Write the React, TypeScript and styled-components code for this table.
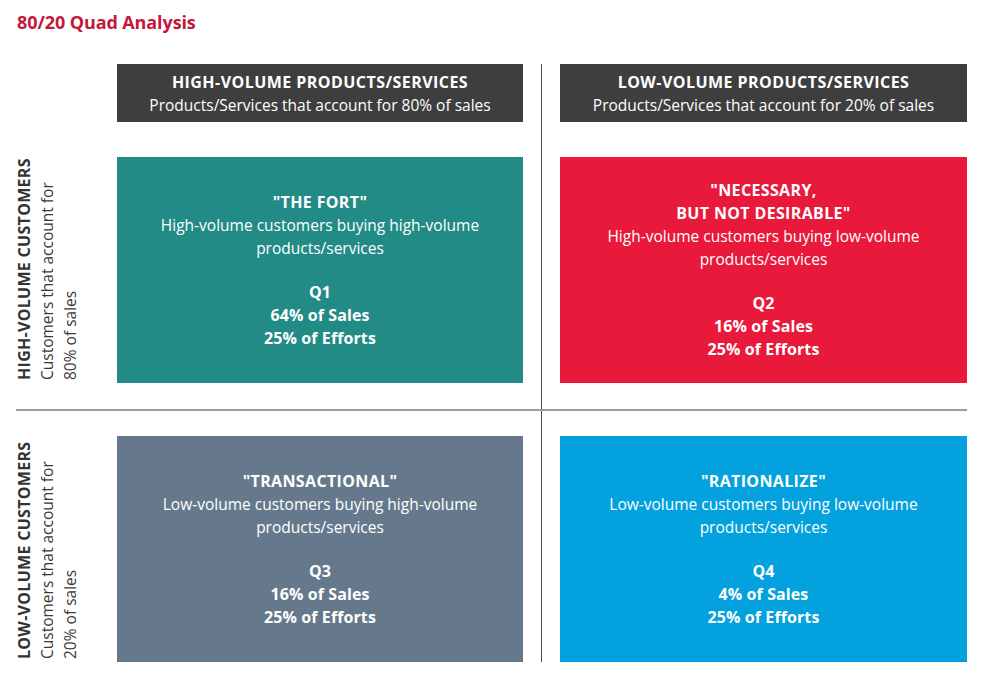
import React from "react";
import styled, { createGlobalStyle } from "styled-components";

const Global = createGlobalStyle`
  html, body { margin: 0; padding: 0; background: #ffffff; }
  body { font-family: "Open Sans", "Noto Sans", Arial, sans-serif; }
`;

const Page = styled.div`
  width: 984px;
  height: 678px;
  box-sizing: border-box;
  padding: 10px 0 0 13px;
  background: #ffffff;
`;

const Title = styled.h1`
  margin: 0;
  font-size: 18px;
  line-height: 24px;
  font-weight: 700;
  color: #c3183c;
  padding-left: 4px;
  letter-spacing: -0.1px;
`;

const Grid = styled.div`
  margin-top: 30px;
  display: grid;
  grid-template-columns: 104px 406px 37px 407px;
  grid-template-rows: 58px 35px 226px 26px 2px 25px 226px;
`;

const ColHeader = styled.div<{ $col: number }>`
  grid-column: ${(p) => p.$col};
  grid-row: 1;
  background: #3e3e3e;
  color: #ffffff;
  display: flex;
  flex-direction: column;
  align-items: center;
  justify-content: center;
  padding-top: 2px;
  font-size: 15.5px;
  line-height: 23px;
`;

const HeadTitle = styled.div`
  font-weight: 700;
  font-size: 16px;
  letter-spacing: 0.45px;
`;

const HeadSub = styled.div`
  font-weight: 400;
`;

const VLine = styled.div`
  grid-column: 3;
  grid-row: 1 / -1;
  justify-self: center;
  width: 1px;
  background: #4a4a4a;
`;

const HLine = styled.div`
  grid-column: 1 / -1;
  grid-row: 5;
  margin-left: 3px;
  background: #9c9c9c;
`;

const RowLabel = styled.div<{ $row: number }>`
  grid-column: 1;
  grid-row: ${(p) => p.$row};
  writing-mode: vertical-rl;
  transform: rotate(180deg);
  justify-self: start;
  font-size: 15.5px;
  line-height: 23px;
  color: #3a3a3a;
  text-align: left;
  padding-top: 3px;
`;

const LabelTitle = styled.div`
  font-weight: 700;
  font-size: 16px;
  letter-spacing: 0.3px;
  color: #333333;
`;

const LabelSub = styled.div`
  font-weight: 400;
`;

const Quad = styled.div<{ $col: number; $row: number; $bg: string }>`
  grid-column: ${(p) => p.$col};
  grid-row: ${(p) => p.$row};
  background: ${(p) => p.$bg};
  color: #ffffff;
  display: flex;
  flex-direction: column;
  align-items: center;
  justify-content: center;
  text-align: center;
  font-size: 15.5px;
  line-height: 23px;
  padding: 0 30px;
`;

const QuadName = styled.div`
  font-weight: 700;
  font-size: 16px;
  letter-spacing: 0.35px;
`;

const QuadDesc = styled.div`
  font-weight: 400;
  max-width: 340px;
  margin-bottom: 21px;
`;

const QuadStat = styled.div`
  font-weight: 700;
  font-size: 16px;
  letter-spacing: 0.1px;
`;

type QuadData = {
  col: number;
  row: number;
  bg: string;
  name: string[];
  desc: string;
  q: string;
  sales: string;
};

const quads: QuadData[] = [
  {
    col: 2,
    row: 3,
    bg: "#228b86",
    name: ['"THE FORT"'],
    desc: "High-volume customers buying high-volume products/services",
    q: "Q1",
    sales: "64% of Sales",
  },
  {
    col: 4,
    row: 3,
    bg: "#e8193b",
    name: ['"NECESSARY,', 'BUT NOT DESIRABLE"'],
    desc: "High-volume customers buying low-volume products/services",
    q: "Q2",
    sales: "16% of Sales",
  },
  {
    col: 2,
    row: 7,
    bg: "#66798c",
    name: ['"TRANSACTIONAL"'],
    desc: "Low-volume customers buying high-volume products/services",
    q: "Q3",
    sales: "16% of Sales",
  },
  {
    col: 4,
    row: 7,
    bg: "#03a1dd",
    name: ['"RATIONALIZE"'],
    desc: "Low-volume customers buying low-volume products/services",
    q: "Q4",
    sales: "4% of Sales",
  },
];

export default function App() {
  return (
    <Page>
      <Global />
      <Title>80/20 Quad Analysis</Title>
      <Grid>
        <ColHeader $col={2}>
          <HeadTitle>HIGH-VOLUME PRODUCTS/SERVICES</HeadTitle>
          <HeadSub>Products/Services that account for 80% of sales</HeadSub>
        </ColHeader>
        <ColHeader $col={4}>
          <HeadTitle>LOW-VOLUME PRODUCTS/SERVICES</HeadTitle>
          <HeadSub>Products/Services that account for 20% of sales</HeadSub>
        </ColHeader>
        <VLine />
        <HLine />
        <RowLabel $row={3}>
          <LabelTitle>HIGH-VOLUME CUSTOMERS</LabelTitle>
          <LabelSub>Customers that account for</LabelSub>
          <LabelSub>80% of sales</LabelSub>
        </RowLabel>
        <RowLabel $row={7}>
          <LabelTitle>LOW-VOLUME CUSTOMERS</LabelTitle>
          <LabelSub>Customers that account for</LabelSub>
          <LabelSub>20% of sales</LabelSub>
        </RowLabel>
        {quads.map((q) => (
          <Quad key={q.q} $col={q.col} $row={q.row} $bg={q.bg}>
            {q.name.map((n) => (
              <QuadName key={n}>{n}</QuadName>
            ))}
            <QuadDesc>{q.desc}</QuadDesc>
            <QuadStat>{q.q}</QuadStat>
            <QuadStat>{q.sales}</QuadStat>
            <QuadStat>25% of Efforts</QuadStat>
          </Quad>
        ))}
      </Grid>
    </Page>
  );
}
